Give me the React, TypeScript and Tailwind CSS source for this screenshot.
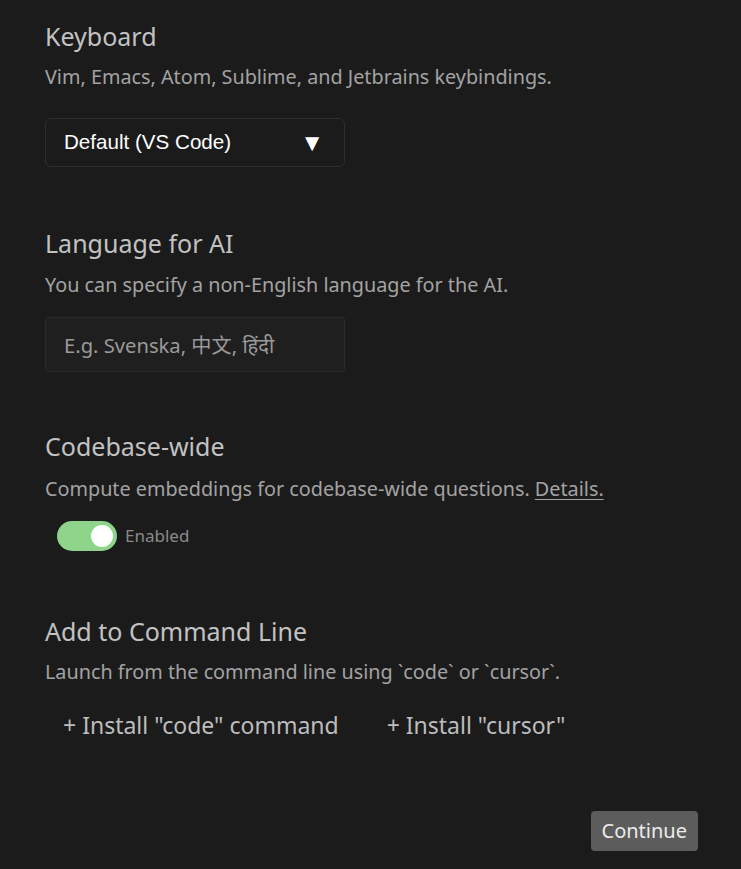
const font = { fontFamily: '"Noto Sans", "Noto Sans CJK SC", sans-serif' };

const Heading = ({ children, className = "" }: { children: React.ReactNode; className?: string }) => (
  <h2 className={`text-[25px] leading-[32px] text-[#c2c2c2] font-normal ${className}`}>{children}</h2>
);

const Desc = ({ children, className = "" }: { children: React.ReactNode; className?: string }) => (
  <p className={`text-[19.8px] leading-[24px] text-[#a3a3a3] ${className}`}>{children}</p>
);

export default function App() {
  return (
    <div
      className="w-[741px] h-[869px] bg-[#1b1b1b] flex flex-col pl-[45px] pr-[43px] pt-[20px] overflow-hidden"
      style={font}
    >
      {/* Keyboard */}
      <Heading>Keyboard</Heading>
      <Desc className="mt-[13px]">Vim, Emacs, Atom, Sublime, and Jetbrains keybindings.</Desc>
      <button className="mt-[29px] w-[300px] h-[49px] rounded-[6px] border border-[#2e2e2e] bg-[#1b1b1b] flex items-center justify-between pl-[18px] pr-[20px] text-white text-[20.6px] font-['Liberation_Sans',sans-serif]">
        <span>Default (VS Code)</span>
        <span className="text-[24px] leading-none">▼</span>
      </button>

      {/* Language */}
      <Heading className="mt-[60px]">Language for AI</Heading>
      <Desc className="mt-[14px]">You can specify a non-English language for the AI.</Desc>
      <input
        placeholder="E.g. Svenska, 中文, हिंदी"
        className="mt-[20px] w-[300px] h-[55px] rounded-[3px] border border-[#2a2a2a] bg-[#1f1f1f] px-[18px] text-[20.2px] text-[#ddd] placeholder:text-[#9a9a9a] outline-none"
      />

      {/* Codebase */}
      <Heading className="mt-[58px]">Codebase-wide</Heading>
      <Desc className="mt-[15px]">
        Compute embeddings for codebase-wide questions.{" "}
        <span className="underline underline-offset-[3px]">Details.</span>
      </Desc>
      <div className="mt-[20px] ml-[12px] flex items-center gap-[8px]">
        <div className="w-[60px] h-[30px] rounded-full bg-[#8ed58b] flex items-center justify-end pr-[4px]">
          <div className="w-[22px] h-[22px] rounded-full bg-white" />
        </div>
        <span className="text-[17px] text-[#8a8a8a]">Enabled</span>
      </div>

      {/* Command line */}
      <Heading className="mt-[64px]">Add to Command Line</Heading>
      <Desc className="mt-[13px]">Launch from the command line using `code` or `cursor`.</Desc>
      <div className="mt-[26px] ml-[18px] flex gap-[48px] text-[23px] leading-[30px] text-[#bdbdbd]">
        <button>+ Install "code" command</button>
        <button>+ Install "cursor"</button>
      </div>

      <div className="flex-1" />
      <div className="flex justify-end pb-[18px]">
        <button className="h-[40px] px-[11px] rounded-[4px] bg-[#5c5c5c] text-[#ececec] text-[20px]">
          Continue
        </button>
      </div>
    </div>
  );
}
